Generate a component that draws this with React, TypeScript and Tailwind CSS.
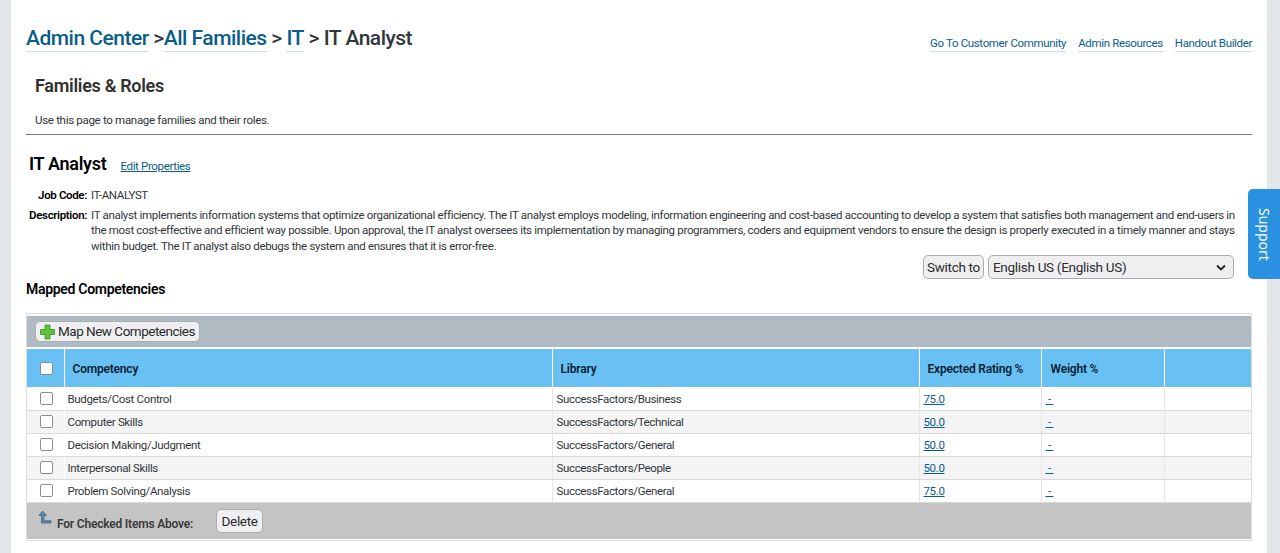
const rows = [
  { name: "Budgets/Cost Control", lib: "SuccessFactors/Business", rating: "75.0" },
  { name: "Computer Skills", lib: "SuccessFactors/Technical", rating: "50.0" },
  { name: "Decision Making/Judgment", lib: "SuccessFactors/General", rating: "50.0" },
  { name: "Interpersonal Skills", lib: "SuccessFactors/People", rating: "50.0" },
  { name: "Problem Solving/Analysis", lib: "SuccessFactors/General", rating: "75.0" },
];

function Check() {
  return <span className="block w-[11px] h-[11px] ml-[13px] bg-white border border-[#8a8f94] rounded-[2px] box-content" />;
}

function TopLink({ children }: { children: React.ReactNode }) {
  return <a className="text-[#0a5d8a] border-b border-[#cfe0ea] leading-[15px]">{children}</a>;
}

export default function App() {
  return (
    <div className="relative h-[553px] overflow-hidden bg-[#e4e7ea] pr-[13px] pl-[11px] text-[11.5px] text-[#32363a] [font-family:Roboto,sans-serif] tracking-[-0.35px]">
      <div className="h-full bg-white pl-[15px] pr-[15px]">
        {/* Breadcrumb */}
        <div className="flex items-start justify-between pt-[25px] h-[61px]">
          <div className="flex text-[21px] leading-[26px] font-medium text-[#32363a] tracking-[-0.5px] whitespace-pre">
            <a className="text-[#0a5d8a] border-b border-[#cfe0ea] h-[27px]">Admin Center</a>
            <span> &gt;</span>
            <a className="text-[#0a5d8a] border-b border-[#cfe0ea] h-[27px]">All Families</a>
            <span> &gt; </span>
            <a className="text-[#0a5d8a] border-b border-[#cfe0ea] h-[27px]">IT</a>
            <span> &gt; IT Analyst</span>
          </div>
          <div className="flex gap-3 pt-[11px]">
            <TopLink>Go To Customer Community</TopLink>
            <TopLink>Admin Resources</TopLink>
            <TopLink>Handout Builder</TopLink>
          </div>
        </div>

        {/* Page title */}
        <div className="border-b border-[#7f7f7f] pl-[9px] pt-[12px] h-[74px]">
          <h1 className="text-[18px] leading-[26px] font-semibold tracking-[-0.3px] text-[#32302e]">Families &amp; Roles</h1>
          <p className="mt-[13px] leading-[17px] tracking-[-0.3px]">Use this page to manage families and their roles.</p>
        </div>

        {/* Role info */}
        <div className="flex items-baseline gap-[14px] pl-[3px] mt-[16px] h-[26px]">
          <h2 className="text-[18px] leading-[26px] font-semibold text-black tracking-[-0.3px]">IT Analyst</h2>
          <a className="text-[#0a5d8a] underline">Edit Properties</a>
        </div>
        <div className="grid grid-cols-[58px_1fr] gap-x-[4px] mt-[11px] pl-[3px] pr-[7px] leading-[15.5px]">
          <div className="font-semibold text-right text-black">Job Code:</div>
          <div>IT-ANALYST</div>
          <div className="font-semibold text-right text-black mt-[4px]">Description:</div>
          <div className="mt-[4px] tracking-[-0.32px]">
            IT analyst implements information systems that optimize organizational efficiency. The IT analyst employs modeling, information engineering and cost-based accounting to develop a system that satisfies both management and end-users in the most cost-effective and efficient way possible. Upon approval, the IT analyst oversees its implementation by managing programmers, coders and equipment vendors to ensure the design is properly executed in a timely manner and stays within budget. The IT analyst also debugs the system and ensures that it is error-free.
          </div>
        </div>

        {/* Language switch */}
        <div className="flex justify-end gap-1 pr-[18px] mt-[1px] h-[24px] text-[13.5px] tracking-[-0.3px] text-[#2c2c2c]">
          <button className="w-[61px] h-[24px] whitespace-nowrap bg-[#efeff1] border border-[#a9acb0] rounded-[5px]">Switch to</button>
          <div className="flex items-center justify-between w-[246px] h-[24px] px-1 bg-[#efeff1] border border-[#a9acb0] rounded-[5px]">
            <span>English US (English US)</span>
            <svg width="10" height="7" viewBox="0 0 10 7" className="mr-[3px]"><path d="M1 1.5l4 4 4-4" fill="none" stroke="#222" strokeWidth="1.8" /></svg>
          </div>
        </div>

        <h3 className="text-[14px] leading-[20px] font-semibold text-black tracking-[-0.3px]">Mapped Competencies</h3>

        {/* Table */}
        <div className="mt-[14px] border border-[#dcdfe2] py-[2px] h-[228px]">
          <div className="flex items-center h-[31px] bg-[#b0bac3] pl-[8px]">
            <button className="flex items-center gap-[3px] h-[21px] pl-1 pr-1 bg-[#efeff1] border border-[#a9acb0] rounded-[5px] text-[13.5px] tracking-[-0.5px] text-[#2c2c2c]">
              <svg width="15" height="16" viewBox="0 0 15 16">
                <path d="M5 1h5v4.5h4.5v5H10V15H5v-4.5H.5v-5H5z" fill="#5fc13c" stroke="#3e8f2a" strokeWidth=".8" />
              </svg>
              Map New Competencies
            </button>
          </div>
          <table className="mt-[2px] w-full table-fixed border-collapse">
            <colgroup>
              <col className="w-[37px]" />
              <col className="w-[488px]" />
              <col className="w-[367px]" />
              <col className="w-[122px]" />
              <col className="w-[123px]" />
              <col />
            </colgroup>
            <thead>
              <tr className="h-[38px] bg-[#68c0f3] text-left text-[#0b2233] text-[12px] tracking-[-0.2px]">
                <th className="border-r border-white"><Check /></th>
                <th className="border-r border-white pl-[8px] pt-[2px] font-semibold">Competency</th>
                <th className="border-r border-white pl-[8px] pt-[2px] font-semibold">Library</th>
                <th className="border-r border-white pl-[8px] pt-[2px] font-semibold">Expected Rating %</th>
                <th className="border-r border-white pl-[9px] pt-[2px] font-semibold">Weight %</th>
                <th />
              </tr>
            </thead>
            <tbody>
              {rows.map((r, i) => (
                <tr key={r.name} className={`h-[23px] border-b border-[#d9d9d9] ${i % 2 ? "bg-[#f4f4f4]" : "bg-white"}`}>
                  <td className="border-r border-white"><Check /></td>
                  <td className="border-r border-[#e6e6e6] pl-[3px] pt-[3px]">{r.name}</td>
                  <td className="border-r border-[#e6e6e6] pl-[4px] pt-[3px]">{r.lib}</td>
                  <td className="border-r border-[#e6e6e6] pl-[4px] pt-[3px]"><a className="text-[#0a5d8a] underline">{r.rating}</a></td>
                  <td className="border-r border-[#e6e6e6] pl-[4px] pt-[3px]"><a className="text-[#0a5d8a] underline">&nbsp;-&nbsp;</a></td>
                  <td />
                </tr>
              ))}
            </tbody>
          </table>
          <div className="flex items-center h-[36px] bg-[#c4c4c4] pl-[11px]">
            <svg width="14" height="16" viewBox="0 0 14 16" className="mb-[6px]">
              <path d="M4.5 1L1 5.5h2.5V13H13v-2.2H6V5.5h2.5z" fill="#5d87a6" stroke="#2f5d80" strokeWidth=".7" />
            </svg>
            <span className="ml-[5px] mt-[6px] text-[12px] tracking-[-0.2px] font-semibold text-[#3a3a3a]">For Checked Items Above:</span>
            <button className="ml-[23px] mt-[1px] h-[24px] w-[47px] bg-[#efeff1] border border-[#a9acb0] rounded-[5px] text-[13.5px] text-[#2c2c2c]">Delete</button>
          </div>
        </div>
      </div>

      {/* Support tab */}
      <div className="absolute left-[1248px] top-[189px] flex h-[90px] w-[32px] items-center justify-center rounded-l-[5px] bg-[#2a90e0] text-[14px] text-white tracking-normal [writing-mode:vertical-rl] [font-family:'Noto_Sans',sans-serif]">
        Support
      </div>
    </div>
  );
}
